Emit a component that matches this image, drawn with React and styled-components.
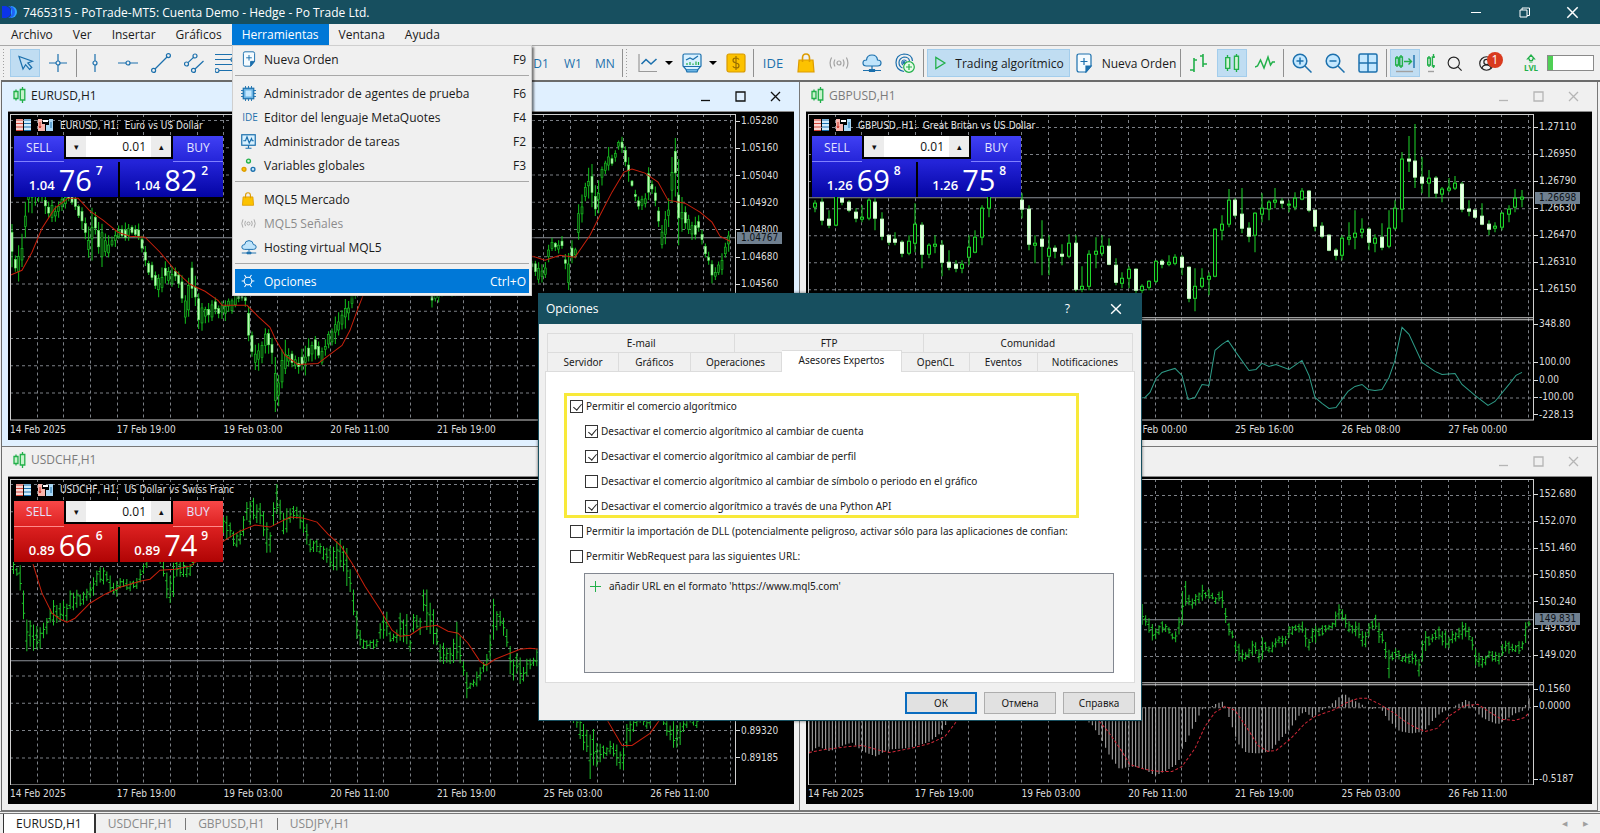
import React, { useState } from 'react'
import styled, { createGlobalStyle, css } from 'styled-components'

const ui = '"Open Sans", "Noto Sans", sans-serif'
const tahoma = '"DejaVu Sans Condensed", "DejaVu Sans", sans-serif'

const blue = '#1c70ad'
const green = '#22b04a'
const teal = '#174f5f'

const GlobalStyle = createGlobalStyle`
    *{
        box-sizing:border-box;
    }
    body{
        margin:0;
        background:#f0f0f0;
        color:#1a1a1a;
        font-family:${ui};
        font-size:12px;
        overflow:hidden;
    }
    button, input{
        font:inherit;
        color:inherit;
        margin:0;
    }
    button{
        padding:0;
        border:0;
        background:none;
    }
    svg{
        display:block;
    }
`

/* ---------- shell ---------- */

const Desktop = styled.div`
    position:relative;
    display:flex;
    flex-direction:column;
    height:100vh;
    overflow:hidden;
`
const TitleBar = styled.header`
    display:flex;
    align-items:center;
    flex:none;
    height:24px;
    padding:0 20px 0 2px;
    gap:5px;
    background:${teal};
    color:#fff;
    h1{
        margin:0;
        font-size:12px;
        font-weight:400;
        flex:1;
    }
`
const TitleButtons = styled.div`
    display:flex;
    gap:33px;
    button{
        width:15px;
        height:15px;
    }
`
const MenuBar = styled.nav`
    display:flex;
    flex:none;
    height:22px;
    padding-left:1px;
    border-bottom:1px solid #a8a8a8;
`
const MenuTitle = styled.button`
    padding:0 10px;
    height:21px;
    background:${p => (p.$open ? '#0078d7' : 'transparent')};
    color:${p => (p.$open ? '#fff' : '#1a1a1a')};
`

/* ---------- toolbar ---------- */

const Toolbar = styled.div`
    display:flex;
    flex:none;
    align-items:center;
    height:34px;
    padding:0 6px 0 2px;
    overflow:hidden;
`
const Group = styled.div`
    display:flex;
    flex:none;
    align-items:center;
    gap:${p => p.$gap || 3}px;
    padding-left:${p => p.$left || 0}px;
`
const Grip = styled.span`
    width:${p => (p.$first ? 3 : 4)}px;
    height:30px;
    margin-right:${p => (p.$first ? 5 : 2)}px;
    background-image:radial-gradient(circle, #a0a0a0 1px, transparent 1px);
    background-size:3px 3px;
`
const Divider = styled.span`
    width:1px;
    height:28px;
    background:#909090;
`
const Tool = styled.button`
    display:flex;
    align-items:center;
    justify-content:center;
    flex:none;
    gap:8px;
    width:${p => (p.$wide ? p.$wide : 30)}px;
    height:28px;
    white-space:nowrap;
    overflow:hidden;
    color:${p => (p.$text ? '#1a1a1a' : blue)};
    ${p => p.$active && css`
        background:#c0ddf2;
        border:1px solid #a3cdec;
    `}
`
const Caret = styled.button`
    width:12px;
    height:28px;
    margin-left:-${p => p.$pull}px;
    &::before{
        content:'';
        display:block;
        margin:auto;
        width:0;
        border:4px solid transparent;
        border-top-color:#000;
        border-bottom-width:0;
    }
`
const Account = styled.button`
    position:relative;
    display:flex;
    align-items:center;
    justify-content:center;
    width:30px;
    height:34px;
`
const Badge = styled.span`
    position:absolute;
    top:6px;
    left:16px;
    width:16px;
    height:16px;
    border-radius:50%;
    background:#d93a1e;
    color:#fff;
    font-size:12px;
    line-height:16px;
    text-align:center;
`
const Level = styled.span`
    display:flex;
    flex-direction:column;
    align-items:center;
    width:30px;
    color:${green};
    font-size:8px;
    font-weight:700;
    line-height:8px;
`
const LevelBar = styled.span`
    width:47px;
    height:16px;
    border:1px solid #8a8a8a;
    background:linear-gradient(90deg, #4fcf55 5px, #fff 5px);
`
const Spacer = styled.span`
    flex:1;
`

/* ---------- drop-down menu ---------- */

const DropDown = styled.div`
    position:absolute;
    z-index:3;
    top:45px;
    left:232px;
    width:300px;
    padding:1px 2px 2px;
    background:#f0f0f0;
    border:1px solid #cfcfcf;
    box-shadow:2px 2px 2px rgba(0, 0, 0, .5);
`
const MenuItem = styled.button`
    display:grid;
    grid-template-columns:28px 1fr auto;
    align-items:center;
    width:100%;
    height:24px;
    padding:0 3px 0 1px;
    text-align:left;
    background:${p => (p.$active ? '#0078d7' : 'transparent')};
    color:${p => (p.$active ? '#fff' : p.disabled ? '#8c8c8c' : '#1a1a1a')};
    svg{
        margin-left:5px;
    }
`
const MenuRule = styled.hr`
    height:1px;
    margin:4px 0 5px;
    border:0;
    background:#a8a8a8;
`
const IdeMark = styled.b`
    font-size:${p => p.$size}px;
    font-weight:400;
    color:${blue};
    text-align:center;
`

/* ---------- chart windows ---------- */

const Workspace = styled.main`
    flex:1;
    min-height:0;
    display:grid;
    grid-template-columns:1fr 1fr;
    grid-template-rows:1fr 1fr;
    margin-left:1px;
    padding:0 2px 0 0;
    border-top:2px solid #6b6b6b;
    border-left:1px solid #6b6b6b;
`
const Frame = styled.section`
    display:flex;
    flex-direction:column;
    min-width:0;
    min-height:0;
    padding:0 5px 6px 6px;
    background:${p => (p.$active ? '#e0f0ff' : '#f0f0f0')};
    border-right:1px solid #777;
    border-bottom:1px solid #777;
`
const FrameTitle = styled.div`
    display:flex;
    align-items:center;
    flex:none;
    height:30px;
    padding:0 12px 0 5px;
    border-bottom:1px solid #8a8a8a;
    color:${p => (p.$active ? '#1a1a1a' : '#7b7b7b')};
    h2{
        display:flex;
        align-items:center;
        gap:5px;
        margin:0;
        padding-bottom:3px;
        flex:1;
        font-size:12px;
        font-weight:400;
    }
`
const FrameButtons = styled.div`
    display:flex;
    gap:22px;
    color:${p => (p.$active ? '#111' : '#b5b5b5')};
    button{
        width:13px;
        height:13px;
    }
`
const ChartBox = styled.div`
    position:relative;
    flex:1;
    min-height:0;
    display:grid;
    grid-template-columns:1fr 58px;
    grid-template-rows:1fr 19px;
    padding:2px 0 0 2px;
    background:#000;
    color:#dcdcdc;
    font-family:${tahoma};
    font-size:10px;
`
const Plot = styled.svg`
    width:100%;
    height:100%;
    min-height:0;
`
const PriceAxis = styled.ul`
    position:relative;
    display:grid;
    grid-template-rows:${p => p.$rows};
    align-items:end;
    margin:0;
    padding:0;
    list-style:none;
    line-height:12px;
`
const Price = styled.li`
    display:flex;
    align-items:center;
    gap:1px;
    &::before{
        content:'';
        width:4px;
        height:1px;
        background:#dcdcdc;
    }
`
const PriceTag = styled.li`
    position:absolute;
    left:1px;
    height:12px;
    margin-top:-6px;
    padding:0 4px;
    background:#708090;
    color:#0c1016;
`
const TimeAxis = styled.ul`
    display:flex;
    margin:0;
    padding:0;
    list-style:none;
    overflow:hidden;
    line-height:18px;
    li{
        flex:0 0 14.7%;
        white-space:nowrap;
    }
`
const ChartHeading = styled.div`
    position:absolute;
    top:7px;
    left:8px;
    display:flex;
    align-items:center;
    gap:7px;
    white-space:pre;
    color:#e4e4e4;
`

/* ---------- one click trading ---------- */

const tones = {
    blue: { top: '#4040f4', mid: '#2424d8', low: '#0404a4', line: '#8080ff' },
    red: { top: '#f84848', mid: '#dc2020', low: '#b00404', line: '#ff8a8a' },
}

const Trade = styled.div`
    position:absolute;
    top:24px;
    left:6px;
    display:grid;
    grid-template-columns:50px 1fr 50px;
    width:209px;
    background:${p => tones[p.$tone].mid};
    color:#fff;
    font-family:${ui};
`
const Side = styled.button`
    height:26px;
    padding-bottom:4px;
    font-size:12px;
    color:#e4e4ff;
    background:${p => `linear-gradient(${tones[p.$tone].top}, ${tones[p.$tone].mid})`};
    box-shadow:inset 0 -4px 0 -3px ${p => tones[p.$tone].line};
`
const Volume = styled.div`
    display:grid;
    grid-template-columns:20px 1fr 20px;
    height:23px;
    padding:0 2px 2px;
    background:#000;
    color:#111;
    button{
        background:#ececec;
        font-size:9px;
    }
    input{
        width:100%;
        min-width:0;
        border:0;
        padding:0 5px;
        text-align:right;
        font-size:12px;
        background:#fff;
    }
`
const Quotes = styled.div`
    grid-column:1 / -1;
    display:grid;
    grid-template-columns:1fr 1fr;
    gap:2px;
    background:#000;
`
const Quote = styled.div`
    display:flex;
    justify-content:center;
    align-items:flex-end;
    gap:4px;
    height:35px;
    padding:0 6px 4px 6px;
    background:${p => `linear-gradient(${tones[p.$tone].mid}, ${tones[p.$tone].low})`};
    font-size:13px;
    font-weight:600;
    line-height:15px;
    big{
        font-size:29px;
        font-weight:400;
        line-height:26px;
    }
    sup{
        align-self:flex-start;
        font-size:12px;
        line-height:18px;
    }
`

/* ---------- bottom tabs ---------- */

const SheetTabs = styled.footer`
    flex:none;
    display:flex;
    align-items:center;
    height:22px;
    padding-left:3px;
    background:#f0f0f0;
    border-top:3px double #777;
    font-size:12px;
    color:#8a8a8a;
`
const SheetTab = styled.button`
    height:${p => (p.$active ? 19 : 12)}px;
    line-height:12px;
    padding:0 12px;
    white-space:nowrap;
    border-right:${p => (p.$last ? 0 : 1)}px solid #777;
    ${p => p.$active && css`
        background:#fff;
        color:#1a1a1a;
        border-right:2px solid #333;
        border-left:1px solid #333;
    `}
`
const SheetArrows = styled.div`
    display:flex;
    gap:16px;
    margin-left:auto;
    padding-right:12px;
    font-size:7px;
    color:#a0a0a0;
`

/* ---------- options dialog ---------- */

const Dialog = styled.section`
    position:absolute;
    z-index:4;
    top:293px;
    left:538px;
    width:604px;
    background:#f0f0f0;
    border:1px solid ${teal};
    border-top:0;
    font-family:"Noto Sans", ${tahoma};
    font-size:10px;
    box-shadow:0 0 3px rgba(0, 0, 0, .6);
`
const DialogTitle = styled.div`
    display:flex;
    align-items:center;
    height:31px;
    padding:0 18px 0 7px;
    gap:39px;
    background:${teal};
    color:#fff;
    font-family:${ui};
    font-size:12px;
    h2{
        flex:1;
        margin:0;
        font-size:12px;
        font-weight:400;
    }
`
const DialogBody = styled.div`
    padding:9px 6px 6px;
`
const TabRow = styled.div`
    display:flex;
    height:19px;
    margin:0 2px;
    border-left:1px solid #dcdcdc;
`
const Tab = styled.button`
    flex:${p => p.$grow} 1 0;
    height:19px;
    border-top:1px solid #dcdcdc;
    border-right:1px solid #dcdcdc;
    ${p => p.$active && css`
        position:relative;
        height:22px;
        margin-top:-2px;
        padding-bottom:3px;
        background:#fff;
    `}
`
const TabPanel = styled.div`
    height:312px;
    padding:21px 20px 0 18px;
    background:#fff;
    border:1px solid #dcdcdc;
`
const Marked = styled.div`
    display:grid;
    gap:1px;
    width:515px;
    padding:1px 0 0 6px;
    box-shadow:inset 0 0 0 3px #f8e93a;
`
const Plain = styled.div`
    display:grid;
    gap:1px;
    padding:1px 0 0 6px;
`
const Option = styled.label`
    display:flex;
    align-items:center;
    gap:3px;
    height:24px;
    padding-left:${p => (p.$nested ? 15 : 0)}px;
    white-space:nowrap;
`
const Tick = styled.input`
    appearance:none;
    position:relative;
    width:13px;
    height:13px;
    border:1px solid #333;
    background:#fff;
    &:checked::after{
        content:'';
        position:absolute;
        top:1px;
        left:4px;
        width:4px;
        height:7px;
        border:solid #222;
        border-width:0 1px 1px 0;
        transform:rotate(40deg);
    }
`
const UrlList = styled.ul`
    height:100px;
    margin:5px 0 0 20px;
    padding:5px;
    list-style:none;
    background:#f0f0f0;
    border:1px solid #828790;
    li{
        display:flex;
        align-items:center;
        gap:8px;
    }
`
const DialogFooter = styled.div`
    display:flex;
    justify-content:flex-end;
    gap:7px;
    padding-top:9px;
`
const PushButton = styled.button`
    width:72px;
    height:22px;
    background:#e1e1e1;
    border:${p => (p.$default ? '2px solid #0a6cbf' : '1px solid #adadad')};
`

/* ---------- icons ---------- */

const Icon = ({ size = 20, children, color = blue, ...rest }) => (
    <svg width={size} height={size} viewBox="0 0 20 20" fill="none" stroke={color} strokeWidth="1.2" {...rest}>
        {children}
    </svg>
)
const Cursor = () => <Icon><path d="M4 3.500l4 12.500 2.600-4.300 4 4.600 2.200-1.800-4-4.600 4.600-1.700z" /></Icon>
const Cross = () => <Icon><path d="M1 10h7M12 10h7M10 1v7M10 12v7" /><circle cx="10" cy="10" r="2" /></Icon>
const VLine = () => <Icon><path d="M10 1v7M10 12v7" /><circle cx="10" cy="10" r="2" /></Icon>
const HLine = () => <Icon><path d="M0 10h8M12 10h8" /><circle cx="10" cy="10" r="2" /></Icon>
const Trend = () => <Icon><circle cx="2.600" cy="17.400" r="2" /><circle cx="17.400" cy="2.600" r="2" /><path d="M4 16L16 4" /></Icon>
const Channel = () => (
    <Icon>
        <circle cx="2.500" cy="11" r="2" /><circle cx="11" cy="3" r="2" /><circle cx="9.500" cy="17.400" r="2" />
        <path d="M4 9.600L9.500 4.400M11 16l8.500-8" />
    </Icon>
)
const Fib = () => (
    <Icon><path d="M0 1.500h20M0 6.500h16M0 11.500h20M4 17.500h16" /><circle cx="2" cy="17.500" r="2" /><circle cx="18" cy="6.500" r="2" /></Icon>
)
const LineChart = () => (
    <Icon><path d="M1 1v17.500h18" stroke="#9a9a9a" /><path d="M3.500 11l4.500-4.500 5 4.500L18.500 6" strokeWidth="1.600" /></Icon>
)
const Indicator = () => (
    <Icon>
        <path d="M1 2.500Q1 1 2.500 1h15Q19 1 19 2.500V13l-3 3.500H4L1 13z" fill="#d9f1ff" />
        <path d="M1 13.500h18M4 16.500l1 2.500h10l1-2.500" fill="#69b3e3" />
        <path d="M4 7l4-2 3 1.500L16 3" />
        <path d="M5 12v-2M8 12v-3M11 12v-1.500M14 12V8.500M16.500 12V9" stroke={green} />
    </Icon>
)
const Dollar = () => (
    <Icon color="#d89a00">
        <rect x="1" y="1" width="18" height="18" rx="2" fill="#fcc200" />
        <path d="M13 6.500Q12 5 10 5 7 5 7 7.300 7 9.500 10 10t3 2.700Q13 15 10 15q-2.200 0-3.200-1.700M10 3v14" stroke="#9a6f00" />
    </Icon>
)
const Bag = ({ size = 20 }) => (
    <Icon size={size} color="#dd9c00">
        <path d="M3 7h14l1 12H2z" fill="#fcc200" /><path d="M6.500 9V5Q6.500 1 10 1t3.500 4v4" strokeWidth="1.600" />
    </Icon>
)
const Signal = ({ size = 20 }) => (
    <Icon size={size} color="#a2a2a2">
        <circle cx="10" cy="10" r="2" />
        <path d="M6 6.500q-2 3.500 0 7M14 6.500q2 3.500 0 7M2.600 4.500q-3 5.500 0 11M17.400 4.500q3 5.500 0 11" />
    </Icon>
)
const Cloud = ({ size = 20 }) => (
    <Icon size={size}>
        <path d="M4.500 13Q1 13 1 10t3.500-3Q5 2 10 2t5.500 5Q19 7 19 10t-3.500 3z" fill="#bfe4fb" />
        <path d="M10 13v3M1 17.500h18" /><path d="M7.500 16.500h5v2h-5z" fill={blue} />
    </Icon>
)
const Cast = () => (
    <Icon>
        <path d="M9 18.500Q1 17 1 9.500T9 1q8 0 8.500 7" /><path d="M7.500 15Q4 13.500 4 9.500T9 4q5 0 5.500 4M8 12Q6.500 11 6.800 9T9 7q2 0 2.500 1.500" />
        <circle cx="9" cy="9.500" r="1" fill={blue} /><circle cx="14" cy="14" r="5.300" stroke={green} fill="#e8fbe9" /><path d="M14 11v6M11 14h6" stroke={green} />
    </Icon>
)
const Play = () => <Icon size={14} color={green} strokeWidth="1.800"><path d="M4 2l13 8-13 8z" /></Icon>
const Order = ({ size = 20 }) => (
    <Icon size={size}>
        <path d="M5 1h10q2 0 2 2v10l-5 6H5q-2 0-2-2V3q0-2 2-2z" fill="#f4fbff" /><path d="M17 13h-5v6z" fill={blue} /><path d="M10 5v7M6.500 8.500h7" />
    </Icon>
)
const Bars = () => <Icon color={green} strokeWidth="1.600"><path d="M5 5v14M5 7h3M1 17h4M14 1v13M11 3h3M14 11h4" /></Icon>
const Candles = ({ size = 20 }) => (
    <Icon size={size} color={green} strokeWidth="1.500"><path d="M5 1v3M5 16v3M15 0v2.500M15 17v3M3 4h4.500v12H3zM12.700 2.500h4.500V17h-4.500z" fill="#d3f3d6" /></Icon>
)
const ZigZag = () => <Icon color={green} strokeWidth="1.500"><path d="M0 14l2.500-1 3-6 3.500 8L13 4l2.500 8 2-3H20" /></Icon>
const ZoomIn = () => <Icon><circle cx="8" cy="8" r="6.800" fill="#c4e8ff" strokeWidth="1.500" /><path d="M4.500 8h7M8 4.500v7M13 13l6.500 6.500" strokeWidth="1.500" /></Icon>
const ZoomOut = () => <Icon><circle cx="8" cy="8" r="6.800" fill="#c4e8ff" strokeWidth="1.500" /><path d="M4.500 8h7M13 13l6.500 6.500" strokeWidth="1.500" /></Icon>
const Tiles = () => <Icon><rect x="1" y="1" width="18" height="18" rx="1.500" fill="#c4e8ff" strokeWidth="1.500" /><path d="M10 1v18M1 10h18" strokeWidth="1.500" /></Icon>
const AutoScroll = () => (
    <Icon color={green} strokeWidth="1.400">
        <path d="M2 3v2M2 12v2M6 2v2M6 13v2M.600 5h2.800v7H.600zM4.800 4h2.600v9H4.800zM9 8.500h7M13.500 5.500l3 3-3 3" />
        <path d="M19 2v13" stroke={blue} /><path d="M1 18.500h17" stroke="#a0a0a0" />
    </Icon>
)
const Shift = () => (
    <svg width="8" height="20" viewBox="0 0 8 20" fill="none" stroke={green} strokeWidth="1.400">
        <path d="M2 3v2M2 12v2M6.500 1v4M6.500 12v3M.700 5h2.600v7H.700zM8 4H5.400v9H8" /><path d="M1 18.500h6" stroke="#a0a0a0" />
    </svg>
)
const Search = () => <Icon size={15} color="#222" strokeWidth="1.500"><circle cx="9" cy="9" r="7.500" /><path d="M14.500 14.500l5 5" /></Icon>
const User = () => <Icon size={15} color="#222" strokeWidth="1.600"><circle cx="10" cy="10" r="9" /><circle cx="10" cy="8" r="3.500" /><path d="M4 16q1-4 6-4t6 4" /></Icon>
const LevelUp = () => <Icon size={10} color={green} strokeWidth="2.400"><path d="M10 2l7 8h-4v3H7v-3H3zM7 16h6" /></Icon>
const Chip = () => (
    <Icon size={15}>
        <rect x="3" y="3" width="14" height="14" fill="#69b3e3" strokeWidth="1.600" />
        <rect x="6" y="6" width="8" height="8" fill="#c4e8ff" stroke="none" />
        <path d="M6 3V0M10 3V0M14 3V0M6 20v-3M10 20v-3M14 20v-3M3 6H0M3 10H0M3 14H0M20 6h-3M20 10h-3M20 14h-3" />
    </Icon>
)
const Monitor = () => (
    <Icon size={15} strokeWidth="1.600">
        <rect x="1" y="1" width="18" height="14" fill="#d9f1ff" /><path d="M3 9h3l2-5 3 8 3-6 1 3h2M6 19h8M10 15v4" />
    </Icon>
)
const Globals = () => (
    <Icon size={15} strokeWidth="1.800">
        <circle cx="10" cy="4" r="2.600" stroke={green} fill="#d3f3d6" /><circle cx="4" cy="15" r="2.600" stroke="#dd9c00" fill="#fcc200" />
        <circle cx="16" cy="15" r="2.600" fill="#c4e8ff" />
    </Icon>
)
const Gear = () => (
    <Icon size={14} color="#fff" strokeWidth="1.500">
        <circle cx="10" cy="10" r="5.500" />
        <path d="M7.500 5L5 1.500M12.500 5L15 1.500M15.500 10H19M4.500 10H1M7.500 15L5 18.500M12.500 15l2.500 3.500" />
    </Icon>
)
const WindowGlyph = () => (
    <svg width="13" height="16" viewBox="0 0 13 16" fill="none" stroke={green} strokeWidth="1.300">
        <path d="M3 2.500v2M3 11.500v2M9.500 0v2.500M9.500 13v3M1 4.500h4v7H1zM7.300 2.500h4.500V13H7.300z" fill="#c7f2cb" />
    </svg>
)
const Close = ({ size = 13 }) => <svg width={size} height={size} viewBox="0 0 13 13" stroke="currentColor" strokeWidth="1.300"><path d="M2 2l9 9M11 2l-9 9" /></svg>
const Maximize = () => <svg width="13" height="13" viewBox="0 0 13 13" fill="none" stroke="currentColor" strokeWidth="1.300"><path d="M2 2h9v9H2z" /></svg>
const Minimize = () => <svg width="13" height="13" viewBox="0 0 13 13" stroke="currentColor" strokeWidth="1.300"><path d="M2 10.500h9" /></svg>
const Restore = () => (
    <svg width="15" height="15" viewBox="0 0 15 15" fill="none" stroke="currentColor"><path d="M3 5h7v7H3zM5 5V3h7.500v7.500H10" /></svg>
)
const Logo = () => (
    <svg width="16" height="14" viewBox="0 0 16 14">
        <path d="M9 1a6 6 0 010 12z" fill="#2fa7ff" /><path d="M0 1h4q5 2 5 6t-5 6H0z" fill="#0b34e8" /><path d="M6 1q7 0 7 6t-7 6q4-2.500 4-6T6 1z" fill="#1f62f5" />
    </svg>
)
const DepthIcon = () => (
    <svg width="15" height="12" viewBox="0 0 15 12">
        <path d="M0 0h7v12H0z" fill="#fbd6d2" /><path d="M8 0h7v12H8z" fill="#d0ebfb" />
        <path d="M0 1h7M0 4.500h7M0 8h7M0 11.500h7" stroke="#d2463a" /><path d="M8 1h7M8 4.500h7M8 8h7M8 11.500h7" stroke="#1c70ad" />
    </svg>
)
const OneClickIcon = () => (
    <svg width="15" height="12" viewBox="0 0 15 12">
        <path d="M0 0h4v5h3v7H0z" fill="#f8b5ad" /><path d="M11 0h4v12H8V6h3z" fill="#a9d8f6" />
        <path d="M5 1h5v2H5z" fill="#fff" /><path d="M2 3v6M1 7l1 2 1-2" stroke="#c8372b" fill="none" /><path d="M13 9V3" stroke="#1c70ad" />
    </svg>
)

/* ---------- chart data: x, high, low in plot units ---------- */

const STEP = 3.3333

const eurBars = [
    12,232,265, 16,255,272, 20,250,286, 24,215,258, 27,190,222, 31,175,210, 38,170,195, 48,198,215, 52,203,222, 58,200,215,
    64,190,210, 70,185,203, 76,197,215, 80,205,220, 84,208,232, 88,230,258, 92,215,255, 95,213,235, 100,225,262, 104,238,265,
    110,235,250, 116,228,243, 124,225,240, 132,222,235, 138,222,238, 142,232,258, 148,255,275, 152,262,285, 157,280,298,
    160,265,293, 164,262,285, 170,268,285, 176,270,282, 181,275,292, 186,293,322, 191,262,310, 196,270,303, 200,305,338,
    205,308,322, 215,300,315, 222,305,322, 230,300,312, 238,290,305, 244,290,300, 248,300,330, 252,335,358, 255,350,372,
    260,345,368, 266,330,352, 270,325,350, 273,350,378, 275,365,407, 278,375,412, 281,352,396, 285,345,375, 290,352,368,
    298,358,370, 302,350,372, 305,348,375, 308,332,355, 312,338,358, 318,340,360, 322,345,362, 328,330,345, 335,320,340,
    340,315,335, 346,300,325, 350,293,318, 356,265,290, 425,250,285, 432,285,303, 436,290,304, 442,265,292, 500,250,280,
    533,258,270, 537,262,280, 541,267,280, 545,260,277, 548,245,262, 552,240,252, 558,243,253, 562,236,250, 566,255,272,
    568,250,288, 572,240,262, 575,250,262, 578,215,250, 581,200,220, 584,175,210, 587,180,203, 590,148,195, 594,180,205,
    598,190,225, 600,175,195, 604,160,178, 608,148,172, 612,152,163, 616,150,162, 619,138,150, 622,134,150, 625,150,168,
    628,158,180, 632,178,187, 636,190,205, 640,200,213, 645,195,208, 648,170,200, 652,180,195, 656,192,210, 659,203,225,
    661,225,247, 664,220,242, 668,200,230, 671,170,210, 674,150,185, 677,125,230, 681,200,230, 685,205,225, 690,220,240,
    695,215,235, 700,218,235, 704,235,250, 708,250,262, 712,262,280, 715,270,283, 718,260,278, 722,250,270, 726,240,258,
    730,230,248,
]
const eurAverage = '10,275 22,270 32,252 42,228 55,208 68,198 78,198 90,211 103,220 118,232 130,236 145,237 160,252 175,270 190,284 205,291 218,300 222,305 247,305 258,316 270,327 276,340 285,355 298,364 318,363 330,354 342,345 350,330 358,308 365,290 400,270 533,256 545,260 560,255 575,257 590,235 600,215 612,192 624,172 632,169 645,173 658,182 668,200 685,203 700,212 712,222 720,236 730,241'

const chfBars = [
    13,563,572, 18,565,575, 21,570,595, 24,592,628, 27,622,655, 30,620,650, 34,622,645, 38,630,645, 42,625,642, 46,615,632,
    50,605,620, 54,602,625, 58,598,615, 62,600,618, 66,600,622, 70,590,612, 76,590,612, 82,592,602, 88,585,600, 94,578,592,
    99,565,582, 104,570,582, 108,573,583, 114,578,595, 122,578,588, 130,580,588, 138,573,587, 144,560,575, 150,545,560,
    162,550,562, 165,565,585, 168,580,608, 172,570,600, 176,560,578, 184,563,573, 190,563,575, 197,545,560, 210,530,550,
    223,520,535, 227,518,535, 232,528,540, 238,535,548, 242,525,545, 246,503,525, 250,500,520, 254,500,520, 258,510,525,
    262,500,520, 265,518,550, 269,535,555, 272,520,540, 275,490,518, 277,488,510, 280,495,520, 284,515,537, 288,510,530,
    292,508,520, 298,506,518, 302,512,530, 306,520,540, 310,535,548, 316,540,550, 322,543,556, 328,545,560, 333,540,565,
    338,545,565, 342,543,570, 346,548,580, 350,560,590, 353,590,612, 358,620,640, 361,632,648, 366,640,648, 372,638,648,
    378,635,645, 382,615,635, 386,610,630, 390,632,640, 396,633,642, 400,612,640, 403,612,640, 408,615,645, 411,640,660,
    414,610,630, 420,612,635, 424,590,612, 428,600,640, 431,595,640, 435,620,635, 438,635,655, 442,642,660, 448,648,660,
    452,640,660, 456,625,650, 460,633,660, 464,660,680, 467,675,695, 470,680,690, 475,675,685, 481,665,680, 485,655,670,
    489,645,665, 492,600,650, 495,610,630, 499,605,625, 503,610,630, 508,632,650, 511,650,680, 515,655,675, 520,660,680,
    523,665,682, 528,655,668, 533,655,665, 538,645,665, 570,680,710, 580,720,740, 585,720,745, 590,725,779, 594,728,755,
    598,745,765, 603,745,758, 608,742,755, 613,738,750, 618,745,770, 622,750,772, 626,730,752, 630,720,740, 634,715,730,
    640,712,722, 648,718,728, 655,705,715, 662,708,718, 667,720,732, 671,722,740, 676,725,752, 680,720,740, 684,718,728,
    690,712,722, 698,716,725, 702,695,710, 730,650,670,
]
const chfAverage = '33,563 42,592 52,612 60,618 67,621 75,617 90,602 105,593 120,586 140,580 150,578 160,569 175,568 190,565 225,539 240,530 255,524 270,526 290,516 303,517 317,521 328,533 341,545 352,562 365,585 380,608 392,629 400,635 410,634 422,626 437,624 448,630 458,632 468,642 480,660 486,664 495,658 510,652 520,648 530,647 540,648 570,660 600,700 608,720 622,744 632,744 650,732 660,718 680,695 730,660'

const jpyBars = [
    809,600,620, 900,560,590, 1000,590,620, 1100,600,620,
    1143,605,622, 1146,612,625, 1150,622,634, 1155,628,640, 1160,620,632, 1165,622,632, 1170,626,632, 1175,635,645,
    1179,615,630, 1182,597,622, 1185,582,602, 1188,592,605, 1192,598,608, 1198,590,602, 1202,584,600, 1206,588,600,
    1212,590,600, 1217,595,604, 1221,590,600, 1225,600,624, 1228,620,630, 1233,632,640, 1237,640,655, 1241,648,660,
    1246,650,657, 1252,642,652, 1257,640,652, 1259,645,664, 1264,636,652, 1270,645,652, 1275,638,648, 1280,632,643,
    1285,634,645, 1290,625,635, 1296,622,630, 1302,619,630, 1305,625,644, 1309,635,648, 1314,628,642, 1320,625,634,
    1326,622,630, 1332,622,628, 1337,608,622, 1340,602,612, 1344,608,622, 1350,625,634, 1356,622,634, 1360,622,640,
    1364,632,648, 1370,620,632, 1375,616,628, 1380,620,640, 1385,635,652, 1388,648,677, 1392,650,658, 1398,648,658,
    1403,655,662, 1409,650,660, 1415,650,665, 1419,655,672, 1422,645,665, 1426,632,648, 1432,632,642, 1438,627,638,
    1444,630,646, 1449,635,648, 1454,630,640, 1460,625,635, 1465,618,635, 1468,625,635, 1472,635,650, 1476,648,662,
    1480,655,665, 1486,655,665, 1489,648,656, 1495,650,660, 1497,655,668, 1502,640,652, 1507,640,650, 1514,645,653,
    1518,638,650, 1524,640,650, 1526,620,640, 1529,618,625,
]
const macd = [
    809,752, 818,745, 830,750, 840,745, 852,741, 863,750, 876,755, 888,748, 905,747, 915,745, 930,740, 940,732, 948,720,
    955,712, 1000,707, 1070,712, 1091,722, 1100,735, 1110,755, 1120,768, 1125,766, 1135,765, 1145,768, 1155,774, 1165,770,
    1178,762, 1182,748, 1190,732, 1197,718, 1202,708, 1210,706, 1215,703, 1222,700, 1226,706, 1231,722, 1238,742, 1246,751,
    1258,752, 1270,750, 1280,738, 1290,728, 1298,715, 1305,710, 1312,716, 1320,710, 1330,704, 1340,695, 1344,692, 1350,697,
    1360,702, 1370,708, 1380,706, 1388,718, 1400,730, 1412,732, 1424,730, 1432,720, 1440,712, 1450,707, 1458,703, 1467,698,
    1475,706, 1480,715, 1490,720, 1498,723, 1506,718, 1515,712, 1522,710, 1526,703, 1529,697,
]
const macdSignal = '809,751 825,748 850,745 862,744 880,749 890,751 910,747 930,742 945,735 955,722 960,715 1000,700 1095,715 1108,730 1120,747 1130,763 1145,768 1160,770 1172,770 1182,765 1195,747 1205,725 1215,711 1225,705 1235,709 1248,728 1258,744 1268,750 1276,749 1290,738 1305,722 1315,715 1335,708 1345,702 1358,697 1368,697 1380,703 1393,711 1405,720 1415,726 1425,730 1437,727 1450,714 1465,704 1478,703 1490,711 1502,718 1515,719 1525,716 1529,711'

// x, high, low, body top, body bottom, rising
const gbpCandles = [
    [815,200,212,203,207,1], [822,198,225,202,220,0], [829,210,228,219,225,0], [836,190,226,190,225,1], [842,198,205,198,202,0],
    [849,200,212,202,210,0], [856,208,222,212,218,0], [862,205,222,217,219,1], [869,198,220,200,218,1], [875,198,230,202,218,0],
    [882,212,240,219,236,0], [889,235,245,235,242,0], [895,232,245,239,242,0], [902,240,257,242,253,0], [909,235,255,241,253,1],
    [915,203,252,224,243,1], [922,222,268,225,254,0], [929,243,258,245,254,1], [935,235,253,244,246,1], [942,240,276,245,262,0],
    [949,250,270,262,267,0], [956,260,272,264,268,0], [962,260,273,264,268,1], [969,235,265,247,257,1], [975,230,253,237,252,1],
    [982,205,245,208,237,1], [989,190,217,195,208,1], [1022,193,218,200,209,0], [1029,205,250,209,244,0], [1035,235,263,243,245,1],
    [1042,220,275,239,246,0], [1049,235,275,248,256,1], [1055,245,258,248,251,0], [1062,244,265,254,256,0], [1069,234,258,243,256,1],
    [1076,235,291,243,289,0], [1082,266,292,286,289,1], [1089,250,290,254,286,1], [1096,237,268,251,254,1], [1102,235,256,246,253,1],
    [1109,238,265,246,264,0], [1116,258,285,265,282,0], [1122,272,288,278,283,1], [1129,266,288,269,278,1], [1136,268,293,269,290,0],
    [1142,284,293,286,290,1], [1149,280,290,281,287,1], [1156,260,283,261,281,1], [1162,259,268,261,264,0], [1169,255,266,262,264,1],
    [1175,254,265,257,263,1], [1182,255,275,257,267,0], [1189,266,302,267,298,0], [1195,268,311,286,298,1], [1202,268,288,278,286,1],
    [1209,272,295,276,279,1], [1215,228,277,229,276,1], [1222,215,240,224,230,1], [1229,189,227,200,224,1], [1235,198,217,200,215,0],
    [1242,188,233,214,228,0], [1249,222,242,228,236,0], [1255,212,252,213,235,1], [1262,193,222,208,214,1], [1269,200,220,202,209,1],
    [1275,188,208,200,202,1], [1282,198,208,201,203,0], [1289,200,212,204,205,1], [1295,192,210,198,207,1], [1302,188,200,191,199,1],
    [1309,190,212,191,210,0], [1315,210,231,210,226,0], [1322,222,238,226,236,0], [1329,234,251,235,250,0], [1336,248,260,250,255,0],
    [1342,235,260,238,255,1], [1349,222,245,237,239,1], [1355,210,249,233,237,1], [1362,218,238,229,232,1], [1369,227,250,229,242,0],
    [1375,234,252,238,243,1], [1382,223,250,237,247,0], [1389,210,248,228,246,1], [1395,200,230,208,228,1], [1402,152,222,159,209,1],
    [1409,136,172,159,161,0], [1415,124,188,161,177,0], [1422,157,193,177,183,0], [1429,170,197,178,183,1], [1436,176,198,178,193,0],
    [1442,187,202,189,194,1], [1449,178,192,188,190,1], [1455,176,190,183,188,1], [1462,182,212,184,209,0], [1469,200,216,209,211,0],
    [1475,209,218,210,217,0], [1482,203,225,216,224,0], [1489,220,235,224,229,0], [1495,222,232,226,228,1], [1502,212,230,213,227,1],
    [1509,205,222,209,214,1], [1515,189,212,198,207,1], [1522,190,207,197,199,1],
]
const gbpMomentum = '808,380 1120,400 1145,397 1150,392 1156,378 1162,372 1168,370 1175,368 1182,375 1188,399 1195,397 1202,384 1209,385 1215,350 1222,344 1228,340 1236,352 1249,370 1256,369 1262,363 1269,366 1276,364 1289,369 1302,360 1309,375 1315,397 1322,403 1329,408 1336,407 1348,391 1355,386 1362,384 1368,389 1375,390 1382,389 1389,377 1395,360 1402,327 1409,334 1422,362 1435,371 1442,374 1455,373 1462,384 1475,395 1488,405 1495,401 1509,384 1516,375 1522,372'

const noise = i => {
    const n = Math.sin(i * 12.9898) * 43758.5453
    return n - Math.floor(n)
}

const sample = (flat, width, x) => {
    let i = 0
    while (i + width * 2 <= flat.length && flat[i + width] < x) i += width
    const j = Math.min(i + width, flat.length - width)
    const span = flat[j] - flat[i] || 1
    const t = Math.max(0, Math.min(1, (x - flat[i]) / span))
    return Array.from({ length: width - 1 }, (_, k) => flat[i + k + 1] + (flat[j + k + 1] - flat[i + k + 1]) * t)
}

const buildBars = (flat, from) => {
    const bars = []
    const last = flat[flat.length - 3]
    for (let x = from, i = 0; x <= last + 1; x += STEP, i++) {
        const [hi, lo] = sample(flat, 3, x)
        const range = lo - hi
        const high = hi + (noise(i) - 0.5) * range * 0.5
        const low = lo + (noise(i + 500) - 0.5) * range * 0.5
        const next = sample(flat, 3, x + STEP)
        const trend = next[0] + next[1] - hi - lo
        const up = Math.abs(trend) > 5 ? trend < 0 : noise(i + 90) > 0.5
        bars.push({ x, high, low, top: high + (low - high) * (0.15 + noise(i + 7) * 0.3), bottom: low - (low - high) * (0.15 + noise(i + 31) * 0.3), up })
    }
    return bars
}

const NarrowCandles = ({ data, from }) =>
    buildBars(data, from).map(b => (
        <g key={b.x}>
            <path d={`M${b.x} ${b.high}V${b.low}`} stroke="#12c41c" />
            <rect x={b.x - 1} y={b.top} width="2" height={b.bottom - b.top} fill={b.up ? '#063c08' : '#b8ffb4'} stroke={b.up ? '#1ccc26' : '#5be85e'} strokeWidth=".6" />
        </g>
    ))

const OhlcBars = ({ data, from }) => (
    <path
        stroke="#1fc42b"
        fill="none"
        d={buildBars(data, from)
            .map(b => `M${b.x} ${b.high}V${b.low}M${b.x - 1.7} ${b.up ? b.bottom : b.top}H${b.x}M${b.x} ${b.up ? b.top : b.bottom}h1.700`)
            .join('')}
    />
)

const WideCandles = ({ data }) =>
    data.map(([x, high, low, top, bottom, up]) => (
        <g key={x}>
            <path d={`M${x} ${high}V${low}`} stroke="#1fd82b" />
            <rect x={x - 1.5} y={top} width="3" height={Math.max(bottom - top, 1)} fill={up ? '#001400' : '#eaffe8'} stroke={up ? '#1fd82b' : '#c8ffc4'} />
        </g>
    ))

const Histogram = ({ data, zero }) => {
    const bars = []
    for (let x = 809; x < 1531; x += STEP) bars.push(`M${x} ${zero}V${sample(data, 2, x)[0]}`)
    return <path d={bars.join('')} stroke="#b4b4b4" />
}

const charts = [
    {
        symbol: 'EURUSD', name: 'Euro vs US Dollar', active: true, tone: 'blue', origin: [10, 114],
        sell: ['1.04', '76', '7'], buy: ['1.04', '82', '2'],
        rows: '13fr repeat(6, 27.2fr) 129.8fr', lines: Array.from({ length: 11 }, (_, i) => 120.5 + i * 27.2),
        prices: [['1.05280'], ['1.05160'], ['1.05040'], ['1.04920'], ['1.04800'], ['1.04680'], ['1.04560']],
        current: ['1.04767', 237.5],
        times: ['14 Feb 2025', '17 Feb 19:00', '19 Feb 03:00', '20 Feb 11:00', '21 Feb 19:00'],
        body: <><NarrowCandles data={eurBars} from={12} /><polyline points={eurAverage} stroke="#c8200c" fill="none" /></>,
    },
    {
        symbol: 'GBPUSD', name: 'Great Britan vs US Dollar', tone: 'blue', origin: [808, 114], split: 317.5,
        sell: ['1.26', '69', '8'], buy: ['1.26', '75', '8'],
        rows: '19fr repeat(6, 27fr) 35fr 38fr 18fr 17fr 17fr',
        lines: [...Array.from({ length: 7 }, (_, i) => 127.5 + i * 27), 362.5, 379.5, 397.5],
        prices: [['1.27110'], ['1.26950'], ['1.26790'], ['1.26630'], ['1.26470'], ['1.26310'], ['1.26150'], ['348.80'], ['100.00'], ['0.00'], ['-100.00'], ['-228.13']],
        current: ['1.26698', 197.5],
        times: ['', '', '', '25 Feb 00:00', '25 Feb 16:00', '26 Feb 08:00', '27 Feb 00:00'],
        body: <><WideCandles data={gbpCandles} /><polyline points={gbpMomentum} stroke="#2e9c88" fill="none" /></>,
    },
    {
        symbol: 'USDCHF', name: 'US Dollar vs Swiss Franc', tone: 'red', origin: [10, 478],
        sell: ['0.89', '66', '6'], buy: ['0.89', '74', '9'],
        rows: '258fr 27fr 21fr', lines: Array.from({ length: 11 }, (_, i) => 483.5 + i * 27.3),
        prices: [['0.89320'], ['0.89185']],
        current: ['', 659.5],
        times: ['14 Feb 2025', '17 Feb 19:00', '19 Feb 03:00', '20 Feb 11:00', '21 Feb 19:00', '25 Feb 03:00', '26 Feb 11:00'],
        body: <><OhlcBars data={chfBars} from={13.5} /><polyline points={chfAverage} stroke="#c8200c" fill="none" /></>,
    },
    {
        symbol: 'USDJPY', origin: [808, 478], split: 681.5, covered: true,
        rows: '22fr repeat(6, 26.8fr) 34fr 17fr 73fr',
        lines: Array.from({ length: 7 }, (_, i) => 494.5 + i * 26.8),
        prices: [['152.680'], ['152.070'], ['151.460'], ['150.850'], ['150.240'], ['149.630'], ['149.020'], ['0.1560'], ['0.0000'], ['-0.5187']],
        current: ['149.831', 618.5],
        times: ['14 Feb 2025', '17 Feb 19:00', '19 Feb 03:00', '20 Feb 11:00', '21 Feb 19:00', '25 Feb 03:00', '26 Feb 11:00'],
        body: (
            <>
                <OhlcBars data={jpyBars} from={809} />
                <path d="M808 706.500h726" stroke="#777" strokeDasharray="3 2" />
                <Histogram data={macd} zero={706} />
                <polyline points={macdSignal} stroke="#d02838" strokeDasharray="3 2" fill="none" />
            </>
        ),
    },
]

const TradePanel = ({ tone, sell, buy, symbol }) => (
    <Trade $tone={tone}>
        <Side $tone={tone}>SELL</Side>
        <Volume>
            <button aria-label="Menos">▾</button>
            <input aria-label={`Volumen ${symbol}`} defaultValue="0.01" />
            <button aria-label="Más">▴</button>
        </Volume>
        <Side $tone={tone}>BUY</Side>
        <Quotes>
            {[sell, buy].map(([a, b, c], i) => (
                <Quote $tone={tone} key={i}>{a}<big>{b}</big><sup>{c}</sup></Quote>
            ))}
        </Quotes>
    </Trade>
)

const ChartWindow = ({ chart }) => {
    const [x0, y0] = chart.origin
    const [tag, tagY] = chart.current
    return (
        <Frame $active={chart.active} aria-label={`${chart.symbol},H1`}>
            <FrameTitle $active={chart.active}>
                <h2><WindowGlyph />{!chart.covered && `${chart.symbol},H1`}</h2>
                <FrameButtons $active={chart.active}>
                    <button aria-label="Minimizar"><Minimize /></button>
                    <button aria-label="Maximizar"><Maximize /></button>
                    <button aria-label="Cerrar"><Close /></button>
                </FrameButtons>
            </FrameTitle>
            <ChartBox>
                <Plot viewBox={`${x0} ${y0} 726 306`} preserveAspectRatio="none">
                    <path
                        stroke="#7c8086"
                        strokeDasharray="3 3"
                        d={chart.lines.map(y => `M${x0} ${y}h725`).join('') + Array.from({ length: 27 }, (_, i) => `M${Math.round(x0 + (i + 1) * 26.66) + 0.5} ${y0}v305`).join('')}
                    />
                    <path d={`M${x0} ${tagY}h725`} stroke="#8c9198" />
                    {chart.body}
                    <path d={`M${x0} ${y0 + 0.5}h725.500v305H${x0 + 0.5}V${y0}`} stroke="#d0d0d0" fill="none" />
                    {chart.split && <path d={`M${x0} ${chart.split}h726M${x0} ${chart.split + 2}h726`} stroke="#d0d0d0" />}
                </Plot>
                <PriceAxis $rows={chart.rows}>
                    {chart.prices.map(([p]) => <Price key={p}>{p}</Price>)}
                    {tag && <PriceTag style={{ top: `${((tagY - y0) / 306) * 100}%` }}>{tag}</PriceTag>}
                </PriceAxis>
                <TimeAxis>{chart.times.map((t, i) => <li key={i}>{t}</li>)}</TimeAxis>
                {!chart.covered && (
                    <>
                        <ChartHeading><DepthIcon /><OneClickIcon />{chart.symbol}, H1:  {chart.name}</ChartHeading>
                        <TradePanel {...chart} />
                    </>
                )}
            </ChartBox>
        </Frame>
    )
}

const menus = ['Archivo', 'Ver', 'Insertar', 'Gráficos', 'Herramientas', 'Ventana', 'Ayuda']

const menuItems = [
    { icon: <Order size={16} />, label: 'Nueva Orden', keys: 'F9' },
    null,
    { icon: <Chip />, label: 'Administrador de agentes de prueba', keys: 'F6' },
    { icon: <IdeMark $size={10}>IDE</IdeMark>, label: 'Editor del lenguaje MetaQuotes', keys: 'F4' },
    { icon: <Monitor />, label: 'Administrador de tareas', keys: 'F2' },
    { icon: <Globals />, label: 'Variables globales', keys: 'F3' },
    null,
    { icon: <Bag size={14} />, label: 'MQL5 Mercado' },
    { icon: <Signal size={15} />, label: 'MQL5 Señales', disabled: true },
    { icon: <Cloud size={16} />, label: 'Hosting virtual MQL5' },
    null,
    { icon: <Gear />, label: 'Opciones', keys: 'Ctrl+O', active: true },
]

const topTabs = [['E-mail', 187], ['FTP', 188], ['Comunidad', 209]]
const tabs = [['Servidor', 71], ['Gráficos', 71], ['Operaciones', 91], ['Asesores Expertos', 121], ['OpenCL', 67], ['Eventos', 68], ['Notificaciones', 95]]

const markedOptions = [
    ['Permitir el comercio algorítmico', true],
    ['Desactivar el comercio algorítmico al cambiar de cuenta', true, true],
    ['Desactivar el comercio algorítmico al cambiar de perfil', true, true],
    ['Desactivar el comercio algorítmico al cambiar de símbolo o periodo en el gráfico', false, true],
    ['Desactivar el comercio algorítmico a través de una Python API', true, true],
]
const otherOptions = [
    ['Permitir la importación de DLL (potencialmente peligroso, activar sólo para las aplicaciones de confian:', false],
    ['Permitir WebRequest para las siguientes URL:', false],
]

const OptionRow = ({ option: [label, checked, nested] }) => (
    <Option $nested={nested}><Tick type="checkbox" defaultChecked={checked} />{label}</Option>
)

const OptionsDialog = () => {
    const [tab, setTab] = useState('Asesores Expertos')
    const renderTab = ([label, grow]) => (
        <Tab key={label} role="tab" aria-selected={tab === label} $grow={grow} $active={tab === label} onClick={() => setTab(label)}>{label}</Tab>
    )
    return (
        <Dialog role="dialog" aria-label="Opciones">
            <DialogTitle>
                <h2>Opciones</h2>
                <button aria-label="Ayuda">?</button>
                <button aria-label="Cerrar"><Close size={14} /></button>
            </DialogTitle>
            <DialogBody>
                <TabRow role="tablist">{topTabs.map(renderTab)}</TabRow>
                <TabRow role="tablist">{tabs.map(renderTab)}</TabRow>
                <TabPanel>
                    <Marked>{markedOptions.map(o => <OptionRow key={o[0]} option={o} />)}</Marked>
                    <Plain>{otherOptions.map(o => <OptionRow key={o[0]} option={o} />)}</Plain>
                    <UrlList>
                        <li>
                            <svg width="11" height="11" viewBox="0 0 11 11" stroke={green}><path d="M5.500 0v11M0 5.500h11" /></svg>
                            añadir URL en el formato 'https://www.mql5.com'
                        </li>
                    </UrlList>
                </TabPanel>
                <DialogFooter>
                    <PushButton $default>ОК</PushButton>
                    <PushButton>Отмена</PushButton>
                    <PushButton>Справка</PushButton>
                </DialogFooter>
            </DialogBody>
        </Dialog>
    )
}

const MainToolbar = () => (
    <Toolbar>
        <Grip $first />
        <Group>
            <Tool $active aria-label="Cursor"><Cursor /></Tool>
            <Tool aria-label="Retículo"><Cross /></Tool>
            <Divider />
            <Tool aria-label="Línea vertical"><VLine /></Tool>
            <Tool aria-label="Línea horizontal"><HLine /></Tool>
            <Tool aria-label="Línea de tendencia"><Trend /></Tool>
            <Tool aria-label="Canal"><Channel /></Tool>
            <Tool $wide={285} aria-label="Fibonacci" style={undefined}><FibStrip /></Tool>
        </Group>
        <Group $gap={2} $left={29}>
            {['D1', 'W1', 'MN'].map(t => <Tool key={t}>{t}</Tool>)}
            <Divider />
            <Grip />
            <Tool aria-label="Tipo de gráfico"><LineChart /></Tool>
            <Caret $pull={2} aria-label="Elegir tipo" />
            <Tool aria-label="Indicadores"><Indicator /></Tool>
            <Caret $pull={2} aria-label="Elegir indicador" />
            <Tool aria-label="Símbolos"><Dollar /></Tool>
            <Divider />
        </Group>
        <Group $left={4}>
            <Tool><IdeMark $size={13}>IDE</IdeMark></Tool>
            <Tool aria-label="Mercado"><Bag /></Tool>
            <Tool aria-label="Señales"><Signal /></Tool>
            <Tool aria-label="Hosting virtual"><Cloud /></Tool>
            <Tool aria-label="Copiar"><Cast /></Tool>
            <Divider />
            <Tool $active $text $wide={143}><Play />Trading algorítmico</Tool>
            <Tool $text $wide={104}><Order />Nueva Orden</Tool>
            <Divider />
            <Tool aria-label="Barras"><Bars /></Tool>
            <Tool $active aria-label="Velas"><Candles size={18} /></Tool>
            <Tool aria-label="Línea"><ZigZag /></Tool>
            <Divider />
            <Tool aria-label="Acercar"><ZoomIn /></Tool>
            <Tool aria-label="Alejar"><ZoomOut /></Tool>
            <Tool aria-label="Mosaico"><Tiles /></Tool>
            <Divider />
            <Tool $active aria-label="Desplazamiento automático"><AutoScroll /></Tool>
            <Tool $wide={15} aria-label="Margen del gráfico"><Shift /></Tool>
            <Tool $wide={27} aria-label="Buscar"><Search /></Tool>
            <Account aria-label="Cuenta, 1 aviso"><User /><Badge>1</Badge></Account>
        </Group>
        <Spacer />
        <Group $gap={1}>
            <Level><LevelUp />LVL</Level>
            <LevelBar />
        </Group>
    </Toolbar>
)

const FibBox = styled.span`
    flex:1;
    padding-left:3px;
`
const FibStrip = () => <FibBox><Fib /></FibBox>

const App = () => (
    <>
        <GlobalStyle />
        <Desktop>
            <TitleBar>
                <Logo />
                <h1>7465315 - PoTrade-MT5: Cuenta Demo - Hedge - Po Trade Ltd.</h1>
                <TitleButtons>
                    <button aria-label="Minimizar"><svg width="15" height="15" stroke="#fff"><path d="M2 7.500h10" /></svg></button>
                    <button aria-label="Restaurar"><Restore /></button>
                    <button aria-label="Cerrar"><Close size={15} /></button>
                </TitleButtons>
            </TitleBar>
            <MenuBar>
                {menus.map(m => <MenuTitle key={m} $open={m === 'Herramientas'}>{m}</MenuTitle>)}
            </MenuBar>
            <MainToolbar />
            <Workspace>
                {charts.map(c => <ChartWindow key={c.symbol} chart={c} />)}
            </Workspace>
            <SheetTabs>
                <SheetTab $active>EURUSD,H1</SheetTab>
                <SheetTab>USDCHF,H1</SheetTab>
                <SheetTab>GBPUSD,H1</SheetTab>
                <SheetTab $last>USDJPY,H1</SheetTab>
                <SheetArrows><span>◀</span><span>▶</span></SheetArrows>
            </SheetTabs>
            <DropDown role="menu">
                {menuItems.map((item, i) =>
                    item ? (
                        <MenuItem key={item.label} role="menuitem" $active={item.active} disabled={item.disabled}>
                            {item.icon}<span>{item.label}</span><span>{item.keys}</span>
                        </MenuItem>
                    ) : (
                        <MenuRule key={i} />
                    )
                )}
            </DropDown>
            <OptionsDialog />
        </Desktop>
    </>
)

export default App
